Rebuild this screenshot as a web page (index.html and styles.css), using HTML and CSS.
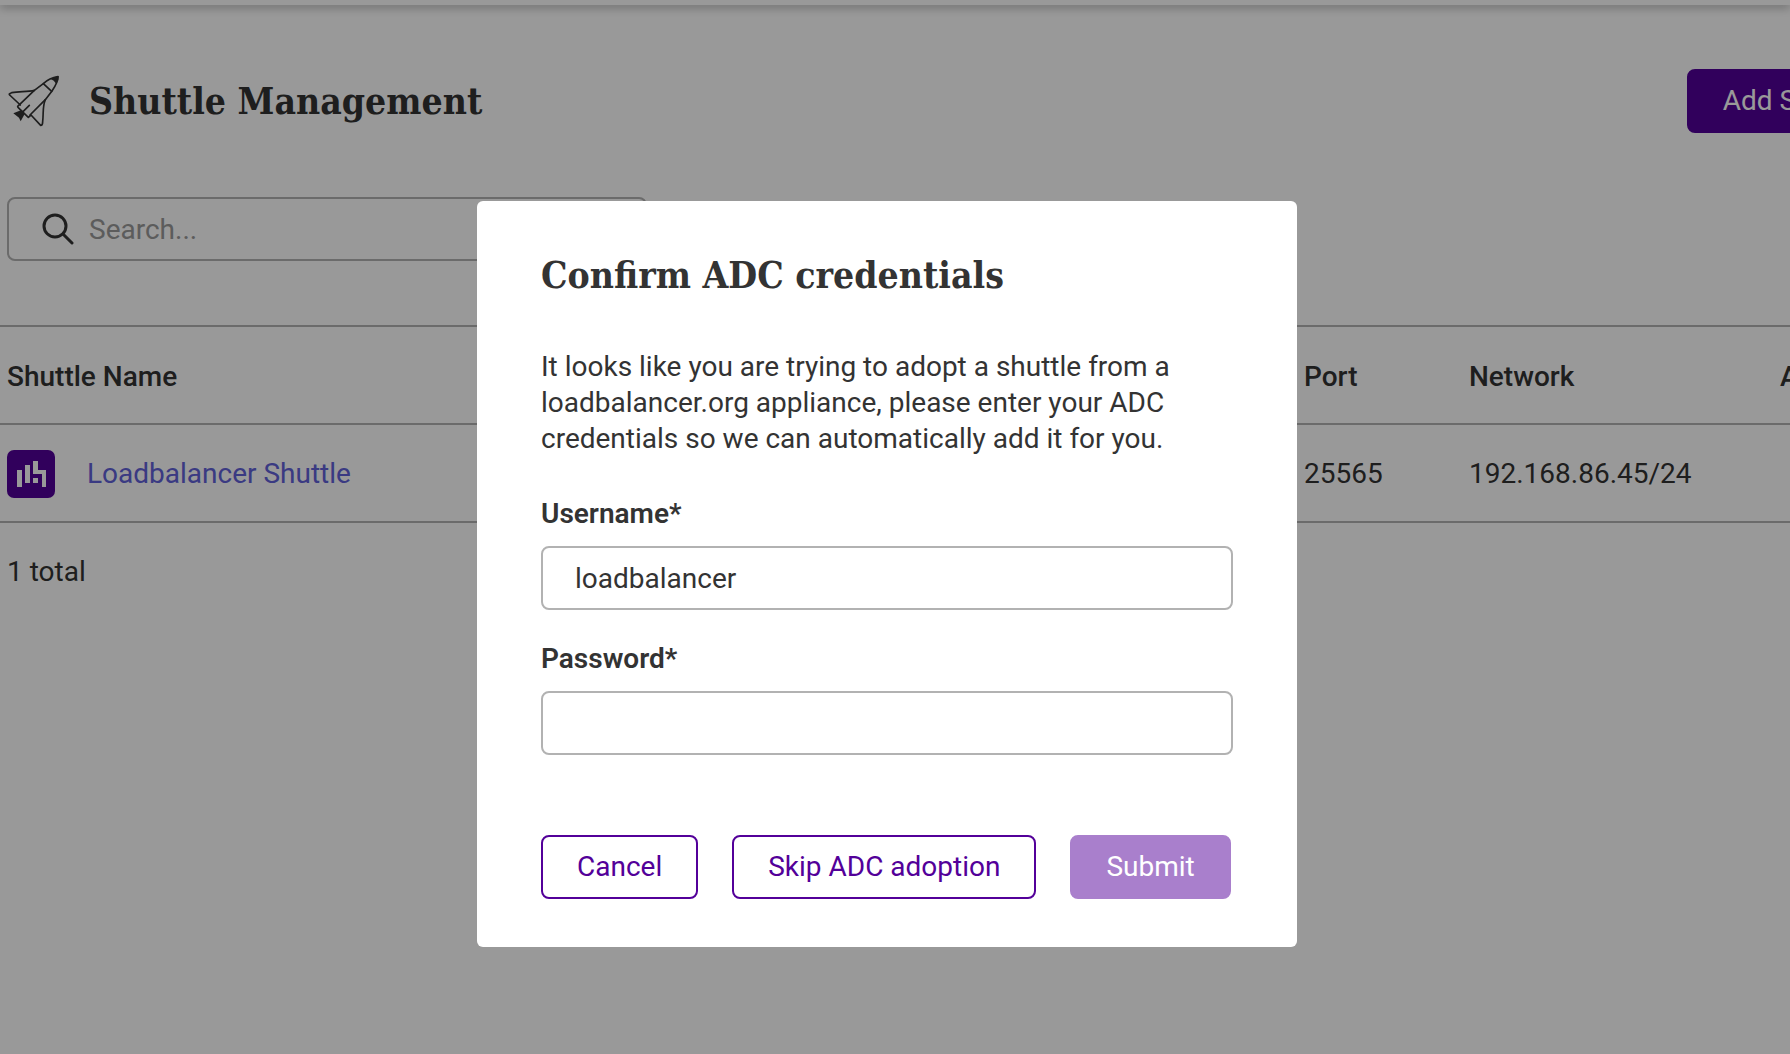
FILE: index.html
```html
<!DOCTYPE html>
<html lang="en">
<head>
  <meta charset="utf-8">
  <meta name="viewport" content="width=device-width, initial-scale=1">
  <title>Shuttle Management</title>
  <link rel="stylesheet" href="styles.css">
</head>
<body>
  <header class="topbar"></header>
  <main class="page">
    <div class="page-head">
      <svg class="rocket" viewBox="21 45 156 156" aria-hidden="true">
        <g fill="none" stroke="#333" stroke-width="5" stroke-linejoin="round" stroke-linecap="round">
          <path d="M53 139L103 91L130 71Q148 54 174 50Q174 66 156 93L136 119L90 165"/>
          <path d="M130 71L155 94"/>
          <path d="M103 91C83 96 60 94 35 98Q25 102 29 105L61 135"/>
          <path d="M54 142L85 172L93 165L122 196Q128 196 128 185C131 160 127 140 136 119"/>
          <path d="M88 136L66 158"/>
        </g>
        <path fill="#333" d="M152 57Q164 49 176 49Q177 61 169 72Q162 60 152 57ZM40 160L57 153L65 149L74 162L62 184L57 173Z"/>
      </svg>
      <h1 class="heading">Shuttle Management</h1>
      <button class="btn btn-primary add" type="button">Add Shuttle</button>
    </div>

    <label class="search">
      <svg class="search-icon" viewBox="0 0 32 32" aria-hidden="true">
        <g fill="none" stroke="#333" stroke-width="3" stroke-linecap="round">
          <circle cx="13" cy="13" r="11"/><path d="M21 21L30 30"/>
        </g>
      </svg>
      <input class="search-input" type="search" placeholder="Search..." aria-label="Search">
    </label>

    <table class="table">
      <colgroup><col><col class="col-port"><col class="col-network"><col class="col-actions"></colgroup>
      <thead>
        <tr><th scope="col">Shuttle Name</th><th scope="col">Port</th><th scope="col">Network</th><th scope="col">Actions</th></tr>
      </thead>
      <tbody>
        <tr>
          <td>
            <div class="name">
              <svg class="logo" viewBox="0 0 48 48" aria-hidden="true">
                <rect width="48" height="48" rx="7" fill="#530099"/>
                <path fill="#fff" d="M10 20h5v17h-5zM18 15h5v18h-5zM26 11h5v9h8v17h-4v-13h-9zM26 28h5v5h-5z"/>
              </svg>
              <a class="link" href="#">Loadbalancer Shuttle</a>
            </div>
          </td>
          <td>25565</td><td>192.168.86.45/24</td><td></td>
        </tr>
      </tbody>
    </table>
    <p class="total">1 total</p>
  </main>

  <div class="overlay">
    <form class="dialog" role="dialog" aria-modal="true" aria-labelledby="dialog-title">
      <h2 class="heading" id="dialog-title">Confirm ADC credentials</h2>
      <p class="intro">It looks like you are trying to adopt a shuttle from a loadbalancer.org appliance, please enter your ADC credentials so we can automatically add it for you.</p>
      <div class="fields">
        <div class="field">
          <label for="username">Username*</label>
          <input class="input" id="username" type="text" value="loadbalancer">
        </div>
        <div class="field">
          <label for="password">Password*</label>
          <input class="input" id="password" type="password">
        </div>
      </div>
      <div class="actions">
        <button class="btn" type="button">Cancel</button>
        <button class="btn" type="button">Skip ADC adoption</button>
        <button class="btn btn-primary" type="submit" disabled>Submit</button>
      </div>
    </form>
  </div>
</body>
</html>
```
FILE: styles.css
```css
* { box-sizing: border-box; }

body {
  margin: 0;
  min-height: 100vh;
  overflow: hidden;
  background: #fff;
  color: #333;
  font: 400 28px/36px Roboto, "Liberation Sans", sans-serif;
}

h1, h2, p { margin: 0; }

.topbar {
  height: 5px;
  box-shadow: 0 2px 10px rgba(0, 0, 0, .4);
}

/* The page is wider than the window and runs off its right edge. */
.page { width: calc(100% + 113px); }

.page-head {
  display: flex;
  align-items: center;
  gap: 30px;
  padding: 64px 0 64px 7px;
}

.rocket { width: 52px; height: 52px; }

.heading {
  font: 700 37px/52px "Roboto Slab", "DejaVu Serif Condensed", "DejaVu Serif", serif;
}

.btn {
  height: 64px;
  padding: 0 34px;
  border: 2px solid #530099;
  border-radius: 8px;
  background: #fff;
  color: #530099;
  font: inherit;
  white-space: nowrap;
}

.btn-primary { background: #530099; color: #fff; }
.btn:disabled { border-color: #a97fcc; background: #a97fcc; }
.add { margin-left: auto; }

.search {
  display: flex;
  align-items: center;
  gap: 15px;
  width: 640px;
  height: 64px;
  margin-left: 7px;
  padding: 0 33px;
  border: 2px solid #b2b2b2;
  border-radius: 8px;
}

.search-icon { width: 32px; height: 32px; }

.search-input {
  flex: 1;
  min-width: 0;
  padding: 2px 0 0;
  border: 0;
  background: none;
  color: inherit;
  font: inherit;
}

.search-input::placeholder { color: #999; }

.table {
  width: 100%;
  margin-top: 64px;
  border-collapse: collapse;
  table-layout: fixed;
  text-align: left;
}

.table th, .table td {
  height: 98px;
  padding: 2px 7px 0;
  border: solid #b2b2b2;
  border-width: 2px 0;
}

.table th { padding-top: 4px; font-weight: 500; }
.col-port { width: 165px; }
.col-network { width: 311px; }
.col-actions { width: 130px; }

.name { display: flex; align-items: center; gap: 32px; }
.logo { width: 48px; height: 48px; }
.link { color: #6161d9; text-decoration: none; }
.total { padding: 31px 7px; }

.overlay {
  position: fixed;
  inset: 0;
  display: flex;
  justify-content: center;
  align-items: flex-start;
  padding: 201px 16px 0 0;
  background: rgba(0, 0, 0, .4);
}

.dialog {
  width: 820px;
  padding: 48px 64px;
  border-radius: 6px;
  background: #fff;
}

.intro { margin-top: 48px; }

.fields {
  display: flex;
  flex-direction: column;
  gap: 31px;
  margin-top: 39px;
}

.field { display: flex; flex-direction: column; gap: 14px; }
.field label { font-weight: 600; }

.input {
  width: 100%;
  height: 64px;
  padding: 0 32px;
  border: 2px solid #b2b2b2;
  border-radius: 8px;
  background: #fff;
  color: inherit;
  font: inherit;
}

.actions { display: flex; gap: 34px; margin-top: 80px; }
```
